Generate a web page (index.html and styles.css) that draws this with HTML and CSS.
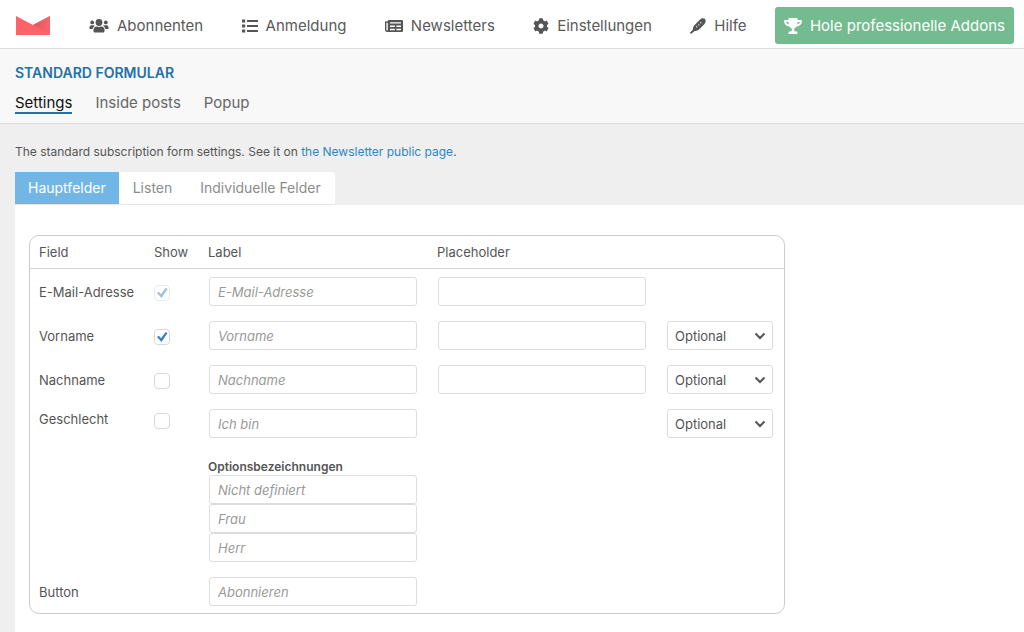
FILE: index.html
```html
<!DOCTYPE html>
<html lang="de">
<head>
<meta charset="utf-8">
<meta name="viewport" content="width=device-width, initial-scale=1">
<title>Standard Formular</title>
<link rel="stylesheet" href="styles.css">
</head>
<body>
<header class="topbar">
  <a class="logo" href="#" aria-label="Newsletter">
    <svg width="34" height="19" viewBox="0 0 34 19"><defs><linearGradient id="fold" x1="0" y1="0" x2="1" y2="0"><stop offset="0" stop-color="#e2565d"/><stop offset="1" stop-color="#f8646a"/></linearGradient></defs><path fill="#ff6268" d="M0 0l17 9L34 0v19H0z"/><path fill="url(#fold)" d="M34 0v18L17 9z"/></svg>
  </a>
  <nav class="menu">
    <a class="menu-item" href="#">
      <svg width="20" height="16" viewBox="0 0 20 16"><circle cx="10" cy="4.500" r="3.400"/><circle cx="3.200" cy="4.400" r="1.900"/><circle cx="16.800" cy="4.400" r="1.900"/><path d="M4.500 13.300V12a3.500 3.500 0 0 1 3.500-3.500q2 .9 4 0a3.500 3.500 0 0 1 3.500 3.500v1.300q0 1.200-1.200 1.200H5.700q-1.200 0-1.200-1.200zM.5 10.500V9.200a2 2 0 0 1 2-2h2q.9 0 1.400.5-2 1.200-2.300 3.300h-2.600q-.5 0-.5-.5zM19.500 10.500V9.200a2 2 0 0 0-2-2h-2q-.9 0-1.400.5 2 1.200 2.300 3.300h2.600q.5 0 .5-.5z"/></svg>
      <span>Abonnenten</span>
    </a>
    <a class="menu-item" href="#">
      <svg width="16" height="16" viewBox="0 0 16 16"><path d="M0 1.500h3.200v3H0zM0 6.500h3.200v3H0zM0 11.500h3.200v3H0zM5 2h11v2H5zM5 7h11v2H5zM5 12h11v2H5z"/></svg>
      <span>Anmeldung</span>
    </a>
    <a class="menu-item" href="#">
      <svg width="18" height="16" viewBox="0 0 18 16"><path fill-rule="evenodd" d="M3.800 2H17q1 0 1 1v10q0 1-1 1H2.200Q0 14 0 11.800V4.200q0-.9.900-.9h1.900V3q0-1 1-1zM1.400 4.800v7q0 .8.700.8t.7-.8v-7zM5 4.200v1.300h11V4.200zM5 7.500v1.500h4.800V7.500zM11.400 7.500v1.500H16V7.500zM5 10.700v1.500h4.800v-1.500zM11.400 10.700v1.500H16v-1.500z"/></svg>
      <span>Newsletters</span>
    </a>
    <a class="menu-item" href="#">
      <svg width="16" height="16" viewBox="0 0 512 512"><path d="M487.400 315.700l-42.600-24.600c4.300-23.200 4.300-47 0-70.200l42.600-24.600c4.900-2.800 7.100-8.600 5.500-14-11.100-35.600-30-67.800-54.700-94.600-3.800-4.100-10-5.100-14.800-2.300L380.800 110c-17.900-15.400-38.500-27.300-60.800-35.100V25.800c0-5.600-3.900-10.500-9.400-11.700-36.700-8.200-74.300-7.800-109.200 0-5.500 1.200-9.400 6.100-9.400 11.700V75c-22.200 7.900-42.800 19.800-60.800 35.100L88.700 85.500c-4.900-2.800-11-1.900-14.800 2.300-24.700 26.700-43.600 58.900-54.700 94.600-1.700 5.400.6 11.200 5.500 14L67.300 221c-4.300 23.200-4.300 47 0 70.200l-42.600 24.600c-4.900 2.800-7.100 8.600-5.500 14 11.100 35.600 30 67.800 54.700 94.600 3.800 4.100 10 5.100 14.800 2.300l42.600-24.600c17.900 15.400 38.500 27.300 60.800 35.100v49.200c0 5.600 3.900 10.500 9.400 11.700 36.700 8.200 74.300 7.800 109.200 0 5.500-1.200 9.400-6.100 9.400-11.700v-49.200c22.200-7.900 42.800-19.800 60.800-35.100l42.600 24.600c4.900 2.800 11 1.900 14.800-2.300 24.700-26.700 43.600-58.900 54.700-94.600 1.500-5.500-.7-11.300-5.600-14.100zM256 336c-44.100 0-80-35.900-80-80s35.900-80 80-80 80 35.900 80 80-35.900 80-80 80z"/></svg>
      <span>Einstellungen</span>
    </a>
    <a class="menu-item" href="#">
      <svg width="16" height="16" viewBox="0 0 16 16"><path d="M.4 15.400q-.6-.5 0-1.100l2.600-2.900q-.3-2.400 1.400-4.200l5.600-5.700Q12.200-.4 14.800.8q1.900 2.400-.3 5.100L9 11.500q-1.800 1.700-4.300 1.400L1.500 15.500q-.6.400-1.100-.1z"/><path class="stitches" d="M10.500 3.800l.5 1.800M8.500 5.800l.5 1.800M6.500 7.800l.5 1.800"/></svg>
      <span>Hilfe</span>
    </a>
    <a class="menu-item addons" href="#">
      <svg width="18" height="16" viewBox="0 0 18 16"><path fill-rule="evenodd" d="M4.500 0h9v2H17q1 0 1 1c0 3-2.300 5-5.300 5.600q-1.100 1.500-2.500 1.900v2.700h1.500q1.800 0 1.800 1.800v1h-9v-1q0-1.800 1.800-1.800h1.500v-2.700Q6.400 10.100 5.300 8.600C2.300 8 0 6 0 3q0-1 1-1h3.500zM2 4q.3 1.700 2.700 2.600Q4.500 5.600 4.500 4zM16 4h-2.500q0 1.600-.2 2.600Q15.700 5.700 16 4z"/></svg>
      <span>Hole professionelle Addons</span>
    </a>
  </nav>
</header>

<section class="heading">
  <h1 class="title">Standard Formular</h1>
  <nav class="subnav">
    <a class="subnav-link current" href="#">Settings</a>
    <a class="subnav-link" href="#">Inside posts</a>
    <a class="subnav-link" href="#">Popup</a>
  </nav>
</section>

<main class="content">
  <p class="intro">The standard subscription form settings. See it on <a href="#">the Newsletter public page</a>.</p>
  <div class="tabs" role="tablist">
    <button class="tab active" type="button" role="tab" aria-selected="true">Hauptfelder</button>
    <button class="tab" type="button" role="tab" aria-selected="false">Listen</button>
    <button class="tab" type="button" role="tab" aria-selected="false">Individuelle Felder</button>
  </div>
  <form class="panel">
    <table class="fields">
      <thead>
        <tr>
          <th class="col-field">Field</th>
          <th class="col-show">Show</th>
          <th class="col-text">Label</th>
          <th class="col-text">Placeholder</th>
          <th class="col-rule"></th>
        </tr>
      </thead>
      <tbody>
        <tr>
          <td><label class="name" for="email">E-Mail-Adresse</label></td>
          <td><input class="check" type="checkbox" aria-label="Show E-Mail-Adresse" checked disabled></td>
          <td><div class="control"><input class="text" id="email" type="text" placeholder="E-Mail-Adresse"></div></td>
          <td><div class="control"><input class="text" type="text" aria-label="E-Mail-Adresse placeholder"></div></td>
          <td></td>
        </tr>
        <tr>
          <td><label class="name" for="first">Vorname</label></td>
          <td><input class="check" type="checkbox" aria-label="Show Vorname" checked></td>
          <td><div class="control"><input class="text" id="first" type="text" placeholder="Vorname"></div></td>
          <td><div class="control"><input class="text" type="text" aria-label="Vorname placeholder"></div></td>
          <td><div class="control"><select class="select" aria-label="Vorname rule"><option>Optional</option></select><svg class="chevron" width="12" height="8" viewBox="0 0 12 8"><path d="M1.500 1.500L6 6l4.500-4.500"/></svg></div></td>
        </tr>
        <tr>
          <td><label class="name" for="last">Nachname</label></td>
          <td><input class="check" type="checkbox" aria-label="Show Nachname"></td>
          <td><div class="control"><input class="text" id="last" type="text" placeholder="Nachname"></div></td>
          <td><div class="control"><input class="text" type="text" aria-label="Nachname placeholder"></div></td>
          <td><div class="control"><select class="select" aria-label="Nachname rule"><option>Optional</option></select><svg class="chevron" width="12" height="8" viewBox="0 0 12 8"><path d="M1.500 1.500L6 6l4.500-4.500"/></svg></div></td>
        </tr>
        <tr class="tall">
          <td><label class="name" for="gender">Geschlecht</label></td>
          <td><input class="check" type="checkbox" aria-label="Show Geschlecht"></td>
          <td>
            <div class="control"><input class="text" id="gender" type="text" placeholder="Ich bin"></div>
            <fieldset class="options">
              <legend class="options-title">Optionsbezeichnungen</legend>
              <div class="control">
                <input class="text" type="text" aria-label="Nicht definiert" placeholder="Nicht definiert">
                <input class="text" type="text" aria-label="Frau" placeholder="Frau">
                <input class="text" type="text" aria-label="Herr" placeholder="Herr">
              </div>
            </fieldset>
          </td>
          <td></td>
          <td><div class="control"><select class="select" aria-label="Geschlecht rule"><option>Optional</option></select><svg class="chevron" width="12" height="8" viewBox="0 0 12 8"><path d="M1.500 1.500L6 6l4.500-4.500"/></svg></div></td>
        </tr>
        <tr>
          <td><label class="name" for="submit-label">Button</label></td>
          <td></td>
          <td><div class="control"><input class="text" id="submit-label" type="text" placeholder="Abonnieren"></div></td>
          <td></td>
          <td></td>
        </tr>
      </tbody>
    </table>
  </form>
</main>
</body>
</html>
```

FILE: styles.css
```css
* { box-sizing: border-box; }

body {
  margin: 0;
  min-height: 100vh;
  display: flex;
  flex-direction: column;
  background: #efefef;
  color: #555;
  font: 13px/20px Inter, "Liberation Sans", sans-serif;
}

a { color: #2f86c1; text-decoration: none; }

.topbar {
  display: flex;
  align-items: center;
  gap: 29px;
  padding: 7px 10px 4px 16px;
  background: #fff;
  border-bottom: 1px solid #dcdcdc;
}
.logo { display: flex; }
.menu {
  flex: 1;
  display: flex;
  justify-content: space-between;
}
.menu-item {
  display: flex;
  align-items: center;
  gap: 8px;
  padding: 8px 10px;
  color: #5a5a5a;
  font-size: 15px;
  line-height: 21px;
  white-space: nowrap;
}
.menu-item svg { fill: #555; }
.menu-item .stitches { fill: none; stroke: #ddd; stroke-width: 1; }
.addons {
  padding: 8px 9px;
  background: #75bb90;
  border-radius: 3px;
  color: #fff;
}
.menu-item.addons svg { fill: #fff; }

.heading {
  padding: 14px 15px 9px;
  background: #f8f8f8;
  border-bottom: 1px solid #dcdcdc;
}
.title {
  margin: 0 0 9px;
  color: #2271a8;
  font-size: 14px;
  line-height: 19px;
  font-weight: 600;
  text-transform: uppercase;
}
.subnav { display: flex; gap: 23px; }
.subnav-link {
  padding-top: 2px;
  color: #666;
  font-size: 15px;
  line-height: 19px;
  border-bottom: 2px solid transparent;
}
.subnav-link.current { color: #111; border-color: #2271a8; }

.content {
  flex: 1;
  display: flex;
  flex-direction: column;
  padding: 18px 0 0 15px;
}
.intro { margin: 0 0 10px; font-size: 12px; }
.tabs {
  align-self: flex-start;
  display: flex;
  background: #fff;
  border-radius: 0 4px 0 0;
  border-bottom: 1px solid #e6e6e6;
}
.tab {
  border: 0;
  padding: 6px 14px;
  background: none;
  color: #8c8c8c;
  font-family: inherit;
  font-size: 14px;
  line-height: 20px;
}
.tab.active { padding: 6px 13px; background: #72b6e6; color: #fff; }

.panel { flex: 1; padding: 30px 14px 17px; background: #fff; }
.fields {
  width: 756px;
  max-width: 100%;
  table-layout: fixed;
  border: 1px solid #ccc;
  border-radius: 10px;
  border-collapse: separate;
  border-spacing: 0;
}
.fields th {
  padding: 6px 10px 6px 9px;
  border-bottom: 1px solid #d4d4d4;
  font-weight: 400;
  text-align: left;
}
.fields td { padding: 8px 10px 7px 9px; vertical-align: middle; }
.fields .tall td { vertical-align: top; }
.col-field { width: 115px; }
.col-show { width: 54px; }
.col-text { width: 229px; }
.name { display: block; white-space: nowrap; }

.control { position: relative; padding: 0 1px; }
.text, .select {
  display: block;
  width: 100%;
  height: 29px;
  margin: 0;
  padding: 0 8px;
  border: 1px solid #ddd;
  border-radius: 3px;
  background: #fff;
  color: #555;
  font: inherit;
}
.text::placeholder { color: #999; font-style: italic; opacity: 1; }
.select { padding: 0 7px; appearance: none; }
.chevron {
  position: absolute;
  right: 8px;
  top: 11px;
  fill: none;
  stroke: #555;
  stroke-width: 2;
  pointer-events: none;
}
.check {
  appearance: none;
  display: block;
  width: 16px;
  height: 16px;
  margin: 2px 0 0;
  border: 1px solid #d8d8d8;
  border-radius: 4px;
  background: #fff;
}
.check:checked::before {
  content: "";
  display: block;
  width: 12px;
  height: 12px;
  margin: 1px;
  background: #3582c4;
  clip-path: polygon(8% 54%, 24% 44%, 42% 64%, 80% 12%, 96% 20%, 46% 96%);
}
.check:disabled { opacity: .5; }
.tall .check { margin-top: 4px; }

.options { margin: 20px 0 0; padding: 0; border: 0; min-width: 0; }
.options-title {
  padding: 0;
  font-size: 12px;
  line-height: 17px;
  font-weight: 600;
}
```
